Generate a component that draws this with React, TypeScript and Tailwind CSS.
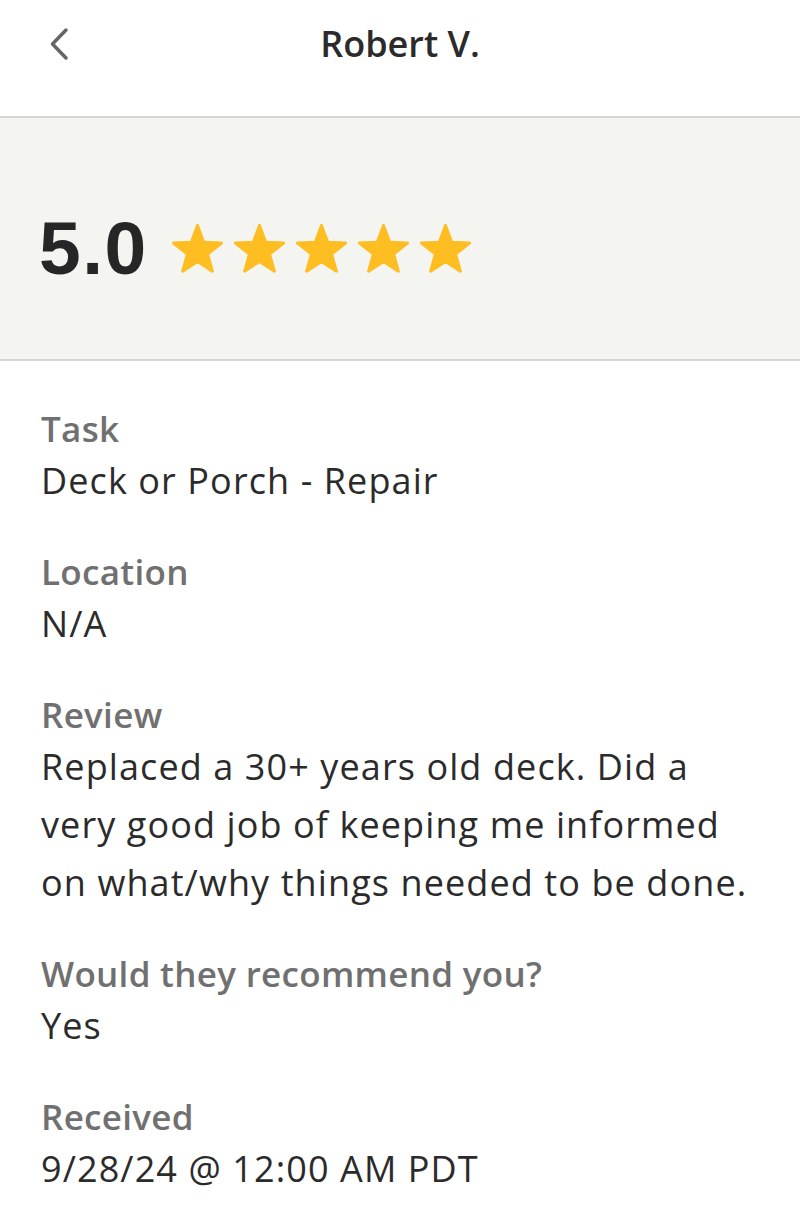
import React from "react";

const Star = () => (
  <svg width="51" height="49" viewBox="0 0 51 49" className="block">
    <path
      d="M25.5 1.5 L31.73 18.22 L49.56 18.98 L35.58 30.08 L40.37 47.27 L25.5 37.4 L10.63 47.27 L15.42 30.08 L1.44 18.98 L19.27 18.22 Z"
      fill="#FEBE22"
      stroke="#FEBE22"
      strokeWidth="3"
      strokeLinejoin="round"
    />
  </svg>
);

const Field = ({ label, children }: { label: string; children: React.ReactNode }) => (
  <div className="flex flex-col">
    <div className="text-[35px] leading-[46px] font-semibold text-[#707070] tracking-[0.3px]">{label}</div>
    <div className="text-[36px] leading-[58px] text-[#2b2b2b] tracking-[1.1px]">{children}</div>
  </div>
);

export default function App() {
  return (
    <div
      className="w-[800px] h-[1215px] bg-white overflow-hidden"
      style={{ fontFamily: '"Open Sans", "Liberation Sans", sans-serif' }}
    >
      <header className="h-[116px] relative flex items-start justify-center pt-[17px]">
        <button className="absolute left-[46px] top-[26px] w-[26px] h-[36px] flex items-center justify-center">
          <svg width="22" height="34" viewBox="0 0 22 34">
            <path d="M18 3 L4.5 17 L18 31" fill="none" stroke="#666666" strokeWidth="3.5" strokeLinecap="round" strokeLinejoin="round" />
          </svg>
        </button>
        <h1 className="text-[36px] leading-[54px] font-semibold text-[#2b2b2b] tracking-[0px]">Robert V.</h1>
      </header>
      <section className="h-[245px] bg-[#f4f4f1] border-t-2 border-b-2 border-[#d6d6d6] flex items-center px-[39px] pt-[19px]">
        <div className="flex items-center gap-[24px]">
          <span
            className="text-[75px] leading-none font-bold text-[#262626] tracking-[1.5px]"
            style={{ fontFamily: '"Liberation Sans", Arial, sans-serif' }}
          >
            5.0
          </span>
          <div className="flex items-center gap-[11px]">
            <Star />
            <Star />
            <Star />
            <Star />
            <Star />
          </div>
        </div>
      </section>
      <main className="px-[41px] pt-[45px] flex flex-col gap-[39px]">
        <Field label="Task">Deck or Porch - Repair</Field>
        <Field label="Location">N/A</Field>
        <Field label="Review">
          Replaced a 30+ years old deck. Did a
          <br />
          very good job of keeping me informed
          <br />
          on what/why things needed to be done.
        </Field>
        <Field label="Would they recommend you?">Yes</Field>
        <Field label="Received">9/28/24 @ 12:00 AM PDT</Field>
      </main>
    </div>
  );
}
